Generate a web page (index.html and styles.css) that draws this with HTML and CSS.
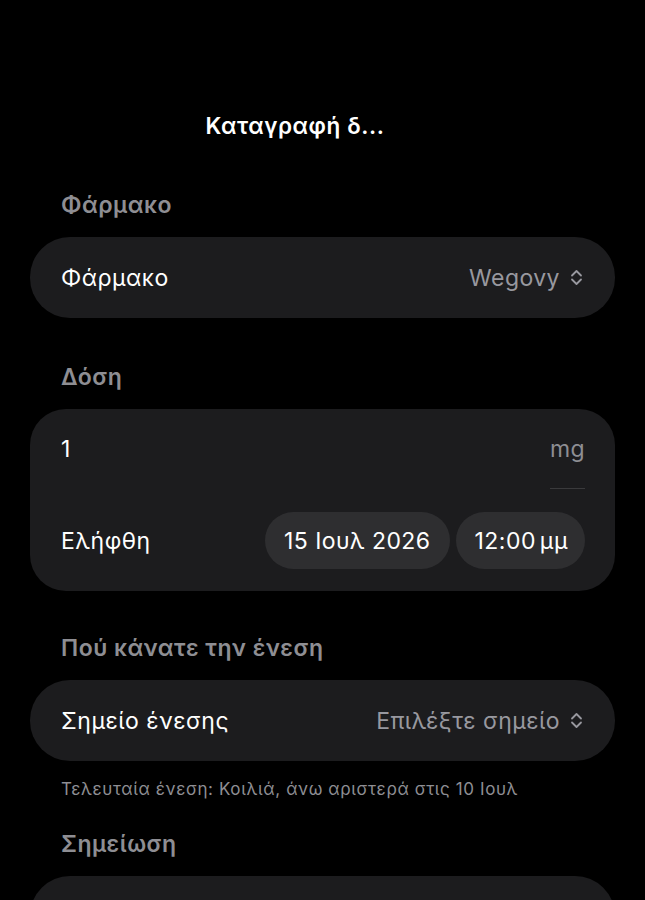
FILE: index.html
```html
<!DOCTYPE html>
<html lang="el">
<head>
<meta charset="utf-8">
<title>Καταγραφή δόσης</title>
<link rel="stylesheet" href="styles.css">
</head>
<body>
<div class="screen">
  <header class="nav">
    <h1 class="nav-title">Καταγραφή δ...</h1>
  </header>

  <section class="section sec-drug">
    <h2 class="section-title">Φάρμακο</h2>
    <div class="card row">
      <span class="label">Φάρμακο</span>
      <span class="picker">Wegovy
        <svg class="chev" viewBox="0 0 13 19" width="13" height="19" aria-hidden="true"><path d="M2 7.5 L6.5 3 L11 7.5 M2 11.5 L6.5 16 L11 11.5" fill="none" stroke="#98989f" stroke-width="1.8" stroke-linecap="round" stroke-linejoin="round"/></svg>
      </span>
    </div>
  </section>

  <section class="section sec-dose">
    <h2 class="section-title">Δόση</h2>
    <div class="card dose-card">
      <div class="dose-row">
        <span class="label">1</span>
        <span class="unit">mg</span>
      </div>
      <div class="taken-row">
        <span class="label">Ελήφθη</span>
        <div class="chips">
          <span class="chip chip-date">15 Ιουλ 2026</span>
          <span class="chip chip-time">12:00<span class="ampm">μμ</span></span>
        </div>
      </div>
    </div>
  </section>

  <section class="section sec-site">
    <h2 class="section-title">Πού κάνατε την ένεση</h2>
    <div class="card row">
      <span class="label">Σημείο ένεσης</span>
      <span class="picker">Επιλέξτε σημείο
        <svg class="chev" viewBox="0 0 13 19" width="13" height="19" aria-hidden="true"><path d="M2 7.5 L6.5 3 L11 7.5 M2 11.5 L6.5 16 L11 11.5" fill="none" stroke="#98989f" stroke-width="1.8" stroke-linecap="round" stroke-linejoin="round"/></svg>
      </span>
    </div>
    <p class="footnote">Τελευταία ένεση: Κοιλιά, άνω αριστερά στις 10 Ιουλ</p>
  </section>

  <section class="section sec-note">
    <h2 class="section-title">Σημείωση</h2>
    <div class="card note-card"></div>
  </section>
</div>
</body>
</html>
```

FILE: styles.css
```css
html, body {
  margin: 0;
  padding: 0;
  background: #000;
}
body {
  font-family: Inter, "Noto Sans", "DejaVu Sans", sans-serif;
  color: #fff;
  -webkit-font-smoothing: antialiased;
}
.screen {
  width: 645px;
  height: 900px;
  overflow: hidden;
}
.nav {
  display: flex;
  justify-content: center;
  padding: 112px 55px 0 0;
}
.nav-title {
  margin: 0;
  font-size: 22.5px;
  line-height: 28px;
  font-weight: 600;
  letter-spacing: 0.6px;
}
.section {
  margin: 0 30px;
}
.sec-drug { margin-top: 51px; }
.sec-dose { margin-top: 45px; }
.sec-site { margin-top: 43px; }
.sec-note { margin-top: 29px; }
.section-title {
  margin: 0 0 18px 31px;
  font-size: 23px;
  line-height: 28px;
  font-weight: 600;
  letter-spacing: 0.5px;
  color: #8e8e93;
}
.card {
  background: #1c1c1e;
  border-radius: 40px;
}
.row {
  height: 81px;
  display: flex;
  align-items: center;
  justify-content: space-between;
  padding: 0 32px 0 31px;
}
.label {
  font-size: 23px;
  line-height: 28px;
  letter-spacing: 0.5px;
  color: #fff;
}
.picker {
  display: flex;
  align-items: center;
  gap: 10px;
  font-size: 23px;
  line-height: 28px;
  letter-spacing: 0.45px;
  color: #98989f;
}
.chev { display: block; }
.dose-card {
  border-radius: 36px;
  padding: 0 30px 22px 31px;
}
.dose-row {
  height: 80px;
  display: flex;
  align-items: center;
  justify-content: space-between;
  margin-bottom: 23px;
}
.unit {
  align-self: stretch;
  display: flex;
  align-items: center;
  font-size: 23px;
  line-height: 28px;
  letter-spacing: 0.4px;
  color: #8e8e93;
  border-bottom: 1px solid #3a3a3c;
  padding-top: 1px;
}
.taken-row {
  display: flex;
  align-items: center;
  justify-content: space-between;
}
.chips {
  display: flex;
  gap: 6px;
}
.chip {
  height: 57px;
  display: flex;
  align-items: center;
  padding: 0 19px;
  border-radius: 29px;
  background: #2e2e30;
  font-size: 23px;
  letter-spacing: 0.45px;
  color: #fff;
}
.chip-time {
  padding: 0 17px 0 19px;
}
.ampm {
  margin-left: 4px;
  letter-spacing: 0.6px;
}
.footnote {
  margin: 16px 0 0 31px;
  font-size: 17px;
  line-height: 24px;
  letter-spacing: 0.62px;
  color: #8e8e93;
}
.note-card {
  height: 120px;
}
```
